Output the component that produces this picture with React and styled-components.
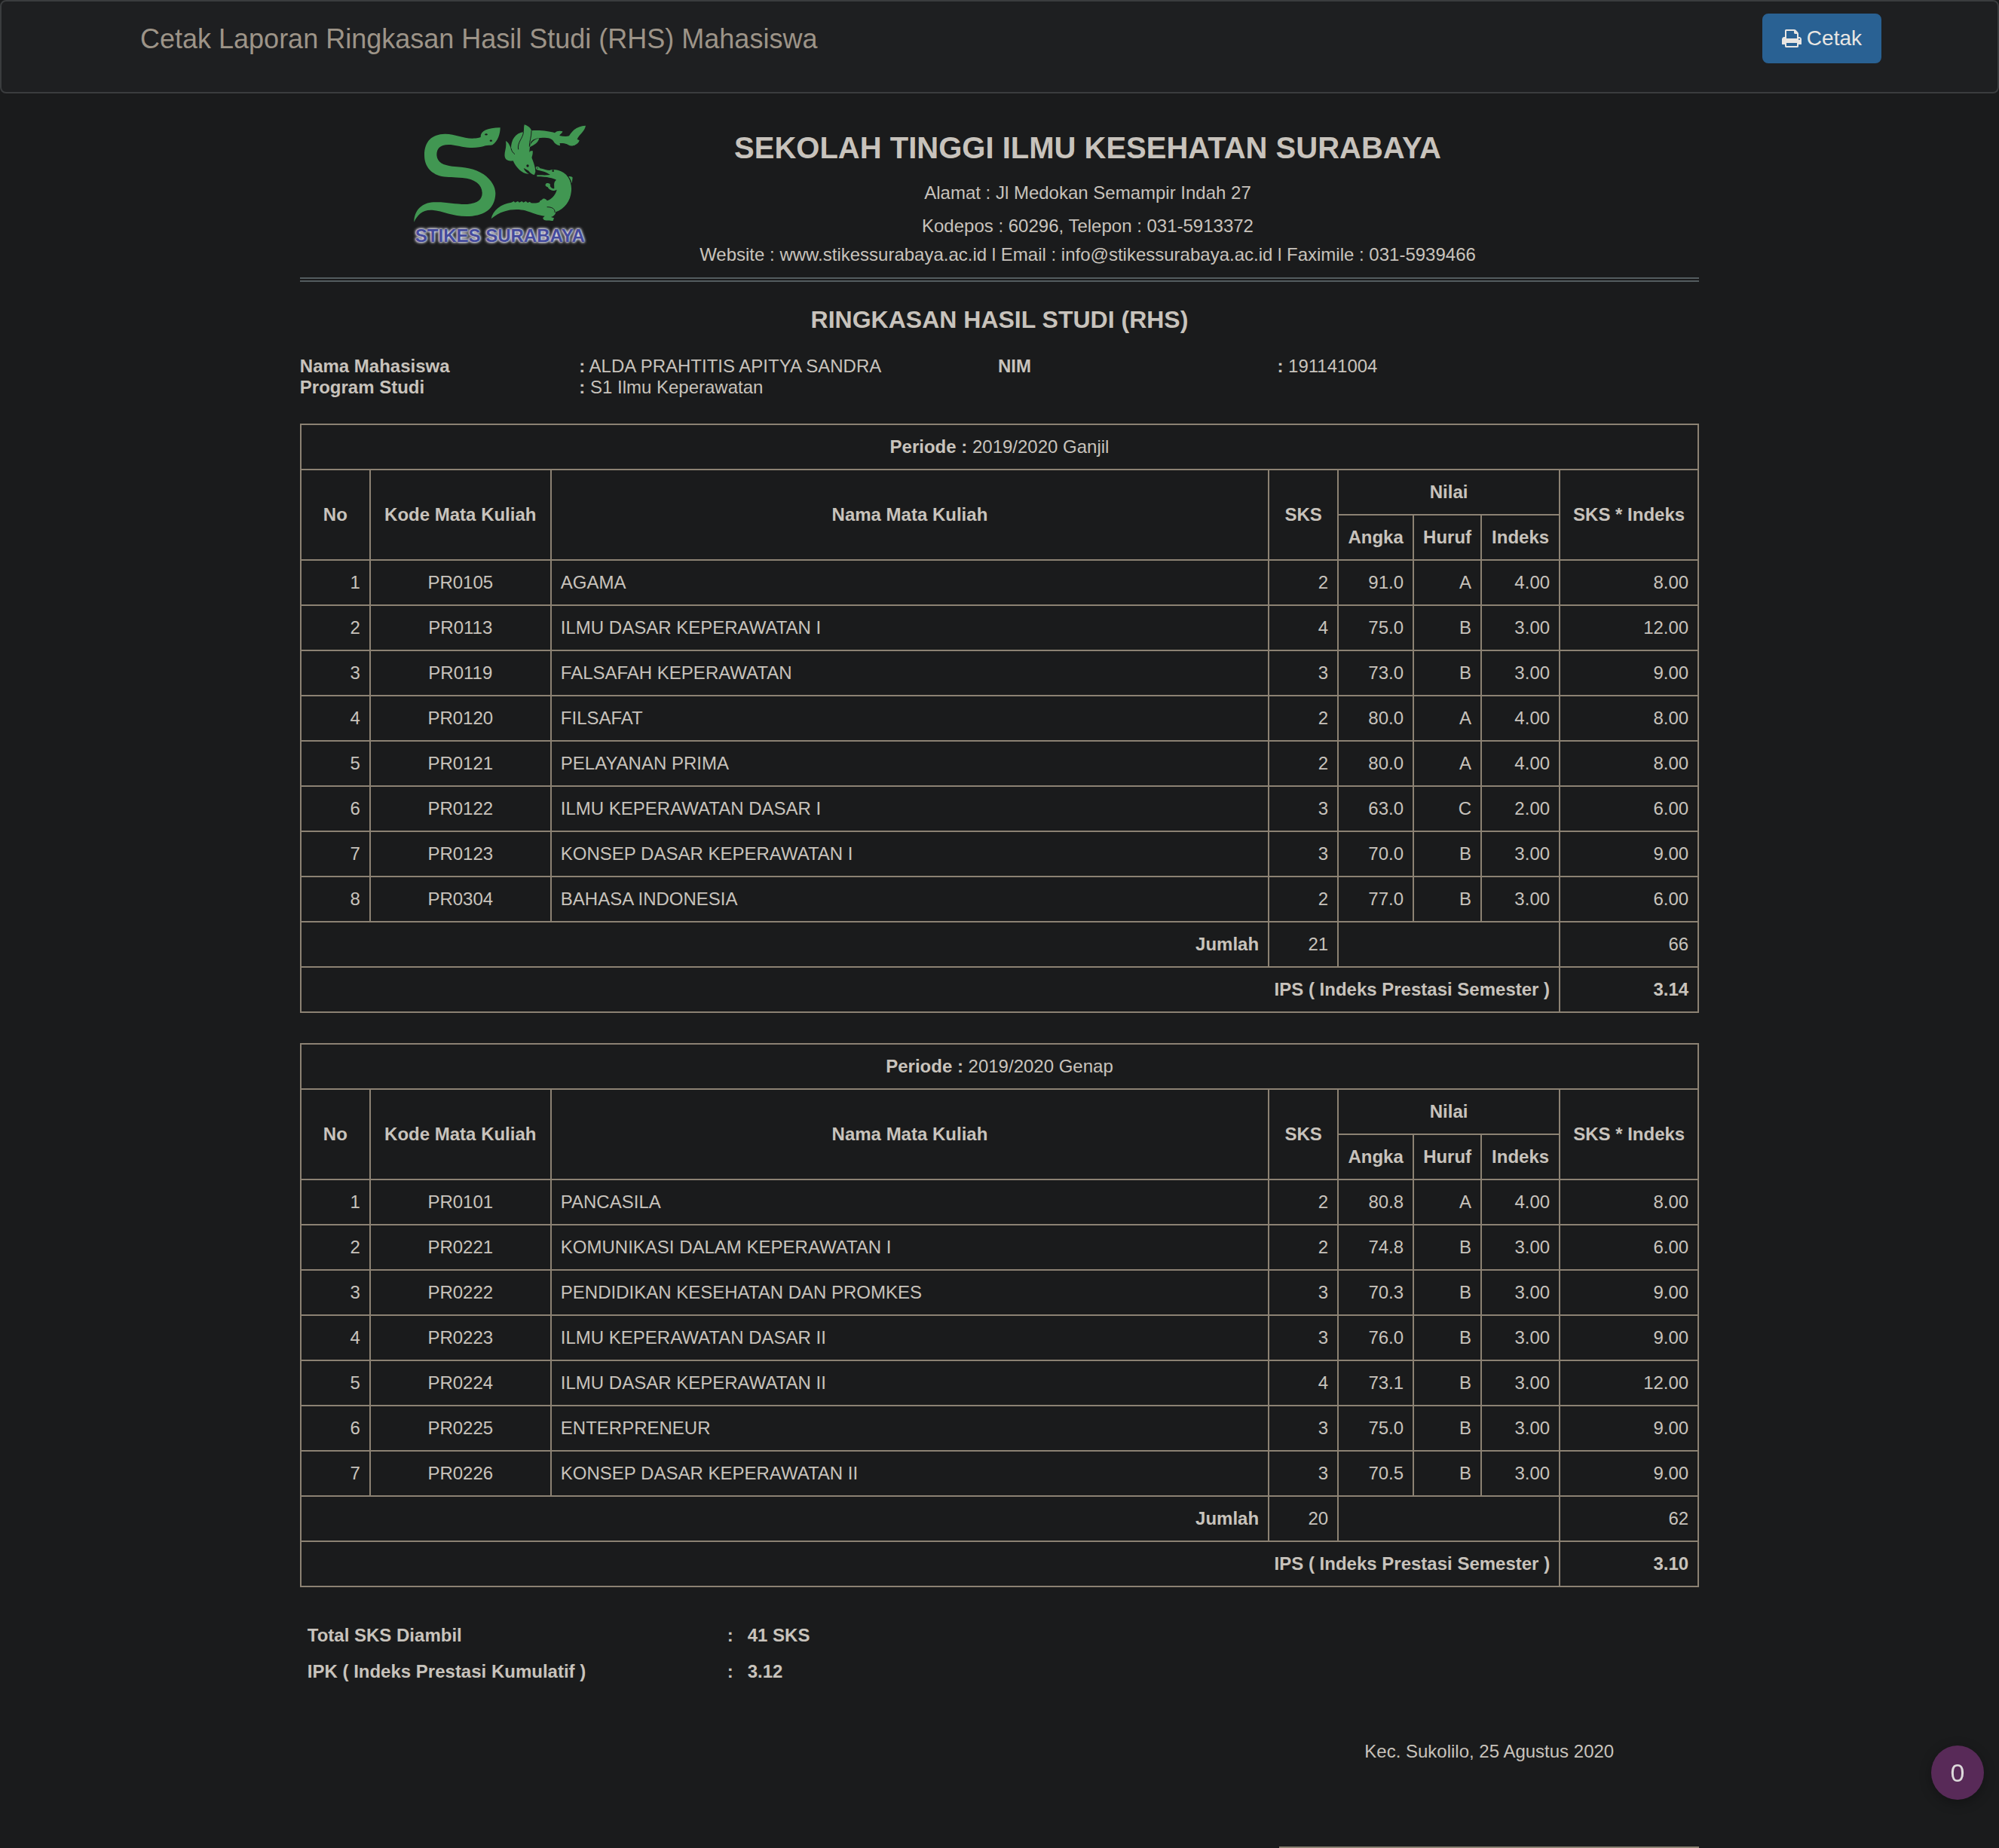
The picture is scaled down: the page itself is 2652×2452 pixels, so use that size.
import React from "react";
import styled, { createGlobalStyle } from "styled-components";

const color = {
  page: "#1a1b1c",
  bar: "#1e1f21",
  barBorder: "#3a3c3e",
  text: "#c8c3bc",
  muted: "#9d9488",
  line: "#8c8273",
  rule: "#535c5f",
  button: "#296193",
  onButton: "#e8e6e3",
  badge: "#582a58",
  logoGreen: "#419752",
  logoBlue: "#444a9c",
};

const GlobalStyle = createGlobalStyle`
  *, *::before, *::after { box-sizing: border-box; }
  body {
    margin: 0;
    background: ${color.page};
    color: ${color.text};
    font-family: "Liberation Sans", Arial, Helvetica, sans-serif;
    font-size: 24px;
    line-height: 34px;
  }
`;

const Navbar = styled.nav`
  background: ${color.bar};
  border: 2px solid ${color.barBorder};
  border-radius: 8px;
`;

const NavContainer = styled.div`
  display: flex;
  justify-content: space-between;
  align-items: flex-start;
  max-width: 2340px;
  min-height: 120px;
  margin: 0 auto;
  padding-left: 30px;
`;

const NavTitle = styled.a`
  padding-top: 30px;
  color: ${color.muted};
  font-size: 36px;
  line-height: 40px;
  text-decoration: none;
`;

const PrintButton = styled.button`
  display: flex;
  align-items: center;
  gap: 7px;
  margin-top: 16px;
  padding: 12px 24px;
  border: 2px solid ${color.button};
  border-radius: 8px;
  background: ${color.button};
  color: ${color.onButton};
  font-family: inherit;
  font-size: 28px;
  line-height: 38px;
  cursor: pointer;
`;

const Report = styled.main`
  width: 70%;
  margin: 0 auto;
`;

const Letterhead = styled.header`
  display: grid;
  grid-template-columns: 234px 1fr;
  padding: 40px 8% 14px;
  border-bottom: 6px double ${color.rule};
`;

const LogoFigure = styled.figure`
  margin: 0;
  text-align: center;
`;

const LogoDrawing = styled.svg`
  display: block;
  width: 100%;
`;

const LogoCaption = styled.figcaption`
  color: ${color.logoBlue};
  font-weight: bold;
  white-space: nowrap;
  text-shadow: 0 0 2px #d8d8e4, 0 0 3px #d8d8e4, 0 0 4px #d8d8e4, 0 0 4px #d8d8e4;
`;

const School = styled.div`
  padding-top: 10px;
  text-align: center;
`;

const SchoolName = styled.h1`
  margin: 0 0 16px;
  font-size: 40px;
  line-height: 44px;
`;

const AddressLine = styled.p`
  margin: 0;
  line-height: ${(p) => (p.$tight ? "32px" : "44px")};
`;

const ReportTitle = styled.h2`
  margin: 32px 0 30px;
  font-size: 32px;
  line-height: 36px;
  text-align: center;
`;

const Identity = styled.dl`
  display: grid;
  grid-template-columns: 20% 30% 20% 30%;
  margin: 0 0 34px;
  padding-right: 4px;
  line-height: 28px;
`;

const Term = styled.dt`
  font-weight: bold;
`;

const Detail = styled.dd`
  margin: 0;
`;

const GradeTable = styled.table`
  width: 100%;
  margin-bottom: 40px;
  border-collapse: collapse;
  table-layout: fixed;
`;

const Col = styled.col`
  width: ${(p) => p.$width};
`;

const cell = `
  height: 60px;
  padding: 10px 12px;
  border: 2px solid ${color.line};
`;

const HeadCell = styled.th`
  ${cell}
  padding: 10px 4px;
  text-align: center;
  font-weight: ${(p) => (p.$plain ? "normal" : "bold")};
`;

const Cell = styled.td`
  ${cell}
  text-align: ${(p) => p.$align || "right"};
  font-weight: ${(p) => (p.$strong ? "bold" : "normal")};
`;

const TotalLabel = styled.th`
  ${cell}
  text-align: right;
`;

const Summary = styled.table`
  width: 100%;
  border-collapse: collapse;
  font-weight: bold;
  line-height: 48px;
`;

const SummaryLabel = styled.th`
  width: 30%;
  padding: 0 10px;
  text-align: left;
`;

const SummaryColon = styled.td`
  width: 27px;
  padding: 0 9px 0 10px;
`;

const SummaryValue = styled.td`
  padding: 0 10px;
`;

const Signature = styled.section`
  width: 30%;
  margin: 65px 0 0 auto;
  padding-bottom: 109px;
  border-bottom: 2px solid ${color.line};
  text-align: center;
`;

const CounterBadge = styled.button`
  position: fixed;
  right: 20px;
  bottom: 64px;
  width: 70px;
  height: 72px;
  padding: 0;
  border: 0;
  border-radius: 50%;
  background: ${color.badge};
  box-shadow: 0 4px 16px rgba(0, 0, 0, 0.3);
  color: #dddadb;
  font-family: inherit;
  font-size: 34px;
  line-height: 70px;
`;

function PrintIcon() {
  return (
    <svg width="26" height="24" viewBox="0 128 1664 1536" fill="currentColor" aria-hidden="true">
      <path d="M384 1536h896v-256h-896v256zM384 896h896v-384h-160q-40 0-68-28t-28-68v-160h-640v640zM1536 960q0-26-19-45t-45-19-45 19-19 45 19 45 45 19 45-19 19-45zM1664 960v416q0 13-9.5 22.5t-22.5 9.5h-224v160q0 40-28 68t-68 28h-960q-40 0-68-28t-28-68v-160h-224q-13 0-22.5-9.5t-9.5-22.5v-416q0-79 56.5-135.5t135.5-56.5h64v-544q0-40 28-68t68-28h672q40 0 88 20t76 48l152 152q28 28 48 76t20 88v256h64q79 0 135.5 56.5t56.5 135.5z" />
    </svg>
  );
}

function Logo() {
  return (
    <LogoFigure>
      <LogoDrawing viewBox="78 70 702 396" fill={color.logoGreen} aria-hidden="true">
        {/* snake */}
        <path d="M88 462C88 415 120 385 165 383C220 381 250 392 300 391C343 388 360 370 359 345C358 312 330 290 280 286C245 283 225 285 198 280C150 268 129 235 129 195C129 140 160 112 210 111C250 110 280 129 320 129C340 129 348 126 353 124C352 100 378 87 431 86C431 110 422 140 400 155C390 158 380 156 372 158C350 165 330 167 300 165C270 162 250 154 225 154C190 155 178 170 178 195C180 225 205 235 240 240C290 243 330 248 365 272C400 298 412 325 412 350C410 400 380 432 320 438C250 445 210 418 160 414C120 412 100 435 88 462Z" />
        <g fill={color.page}>
          <ellipse cx="375" cy="113" rx="5" ry="3.5" />
          <ellipse cx="394" cy="138" rx="5" ry="3.5" />
        </g>
        {/* shark */}
        <path d="M555 98C590 95 625 100 648 107C655 99 668 98 679 101C679 108 670 111 667 118C680 121 695 123 705 119C718 98 735 80 771 78C768 100 745 113 737 132L746 137C743 148 730 160 708 158C695 150 688 148 668 148C667 152 670 155 669 158C655 156 647 148 642 139C637 130 625 126 600 126C575 127 558 132 552 146C549 157 549 165 547 180C550 196 571 230 571 262L567 274C558 273 550 266 544 258C538 254 530 250 524 247C528 258 535 265 545 270C520 272 495 247 482 218C470 220 455 218 450 205C444 185 458 170 453 139C465 145 470 160 474 170C474 135 490 108 524 103C526 95 524 85 527 74C545 80 553 90 555 98Z" />
        <path d="M549 164C550 148 565 132 586 128C583 146 565 155 549 164Z" />
        <path d="M546 187C548 180 552 178 560 178C562 190 557 202 554 212C551 203 548 196 546 187Z" />
        <g fill="none" stroke={color.page} strokeWidth="3">
          <path d="M523 103C524 125 497 145 503 173" />
          <path d="M555 98C556 122 546 142 547 162" />
          <path d="M474 168C476 180 482 186 489 192" />
        </g>
        <circle cx="540" cy="238" r="5" fill={color.page} />
        {/* crocodile */}
        <path d="M574 242C583 239 587 245 589 248C605 251 615 256 628 256C636 251 650 253 660 255C698 264 716 297 714 335C712 375 690 408 652 422C650 434 642 440 633 442L645 446L641 457C625 455 618 458 605 453L600 446L608 438C580 436 560 425 530 416C500 408 440 408 395 449C401 415 435 389 475 384L485 379L490 384L501 379L507 384L517 379L523 384L533 379L540 385L549 381L553 386C570 388 578 386 588 382C587 376 594 377 600 370C607 366 615 372 617 377C640 370 652 350 656 333C640 342 626 335 620 323C608 320 608 312 616 307C628 305 632 312 629 318C635 328 642 330 646 328C646 315 642 304 654 294C640 288 620 281 577 281L577 275C600 275 615 276 630 274C615 264 600 259 585 256C572 254 570 246 574 242Z" />
        <path d="M702 281C708 278 718 281 719 285L716 308L713 303C711 294 707 287 702 281Z" />
        <g fill="none" stroke={color.page} strokeWidth="3">
          <path d="M617 402C635 402 650 408 648 424" />
          <path d="M698 277C710 290 716 305 716 325" />
        </g>
        <circle cx="641" cy="258" r="4" fill={color.page} />
        <circle cx="579" cy="247" r="2.5" fill={color.page} />
      </LogoDrawing>
      <LogoCaption>STIKES SURABAYA</LogoCaption>
    </LogoFigure>
  );
}

const semesters = [
  {
    period: "2019/2020 Ganjil",
    courses: [
      ["PR0105", "AGAMA", 2, "91.0", "A", "4.00", "8.00"],
      ["PR0113", "ILMU DASAR KEPERAWATAN I", 4, "75.0", "B", "3.00", "12.00"],
      ["PR0119", "FALSAFAH KEPERAWATAN", 3, "73.0", "B", "3.00", "9.00"],
      ["PR0120", "FILSAFAT", 2, "80.0", "A", "4.00", "8.00"],
      ["PR0121", "PELAYANAN PRIMA", 2, "80.0", "A", "4.00", "8.00"],
      ["PR0122", "ILMU KEPERAWATAN DASAR I", 3, "63.0", "C", "2.00", "6.00"],
      ["PR0123", "KONSEP DASAR KEPERAWATAN I", 3, "70.0", "B", "3.00", "9.00"],
      ["PR0304", "BAHASA INDONESIA", 2, "77.0", "B", "3.00", "6.00"],
    ],
    credits: 21,
    points: 66,
    ips: "3.14",
  },
  {
    period: "2019/2020 Genap",
    courses: [
      ["PR0101", "PANCASILA", 2, "80.8", "A", "4.00", "8.00"],
      ["PR0221", "KOMUNIKASI DALAM KEPERAWATAN I", 2, "74.8", "B", "3.00", "6.00"],
      ["PR0222", "PENDIDIKAN KESEHATAN DAN PROMKES", 3, "70.3", "B", "3.00", "9.00"],
      ["PR0223", "ILMU KEPERAWATAN DASAR II", 3, "76.0", "B", "3.00", "9.00"],
      ["PR0224", "ILMU DASAR KEPERAWATAN II", 4, "73.1", "B", "3.00", "12.00"],
      ["PR0225", "ENTERPRENEUR", 3, "75.0", "B", "3.00", "9.00"],
      ["PR0226", "KONSEP DASAR KEPERAWATAN II", 3, "70.5", "B", "3.00", "9.00"],
    ],
    credits: 20,
    points: 62,
    ips: "3.10",
  },
];

const columnWidths = ["92px", "240px", "auto", "92px", "100px", "90px", "104px", "184px"];

function SemesterTable({ semester }) {
  return (
    <GradeTable>
      <colgroup>
        {columnWidths.map((width, i) => (
          <Col key={i} $width={width} />
        ))}
      </colgroup>
      <thead>
        <tr>
          <HeadCell colSpan={8} $plain>
            <b>Periode :</b> {semester.period}
          </HeadCell>
        </tr>
        <tr>
          <HeadCell rowSpan={2}>No</HeadCell>
          <HeadCell rowSpan={2}>Kode Mata Kuliah</HeadCell>
          <HeadCell rowSpan={2}>Nama Mata Kuliah</HeadCell>
          <HeadCell rowSpan={2}>SKS</HeadCell>
          <HeadCell colSpan={3}>Nilai</HeadCell>
          <HeadCell rowSpan={2}>SKS * Indeks</HeadCell>
        </tr>
        <tr>
          <HeadCell>Angka</HeadCell>
          <HeadCell>Huruf</HeadCell>
          <HeadCell>Indeks</HeadCell>
        </tr>
      </thead>
      <tbody>
        {semester.courses.map(([code, name, credits, score, letter, index, points], i) => (
          <tr key={code}>
            <Cell>{i + 1}</Cell>
            <Cell $align="center">{code}</Cell>
            <Cell $align="left">{name}</Cell>
            <Cell>{credits}</Cell>
            <Cell>{score}</Cell>
            <Cell>{letter}</Cell>
            <Cell>{index}</Cell>
            <Cell>{points}</Cell>
          </tr>
        ))}
      </tbody>
      <tfoot>
        <tr>
          <TotalLabel colSpan={3} scope="row">Jumlah</TotalLabel>
          <Cell>{semester.credits}</Cell>
          <Cell colSpan={3} />
          <Cell>{semester.points}</Cell>
        </tr>
        <tr>
          <TotalLabel colSpan={7} scope="row">IPS ( Indeks Prestasi Semester )</TotalLabel>
          <Cell $strong>{semester.ips}</Cell>
        </tr>
      </tfoot>
    </GradeTable>
  );
}

export default function App() {
  return (
    <>
      <GlobalStyle />
      <Navbar>
        <NavContainer>
          <NavTitle href="#">Cetak Laporan Ringkasan Hasil Studi (RHS) Mahasiswa</NavTitle>
          <PrintButton type="button" onClick={() => window.print()}>
            <PrintIcon />
            Cetak
          </PrintButton>
        </NavContainer>
      </Navbar>

      <Report>
        <Letterhead>
          <Logo />
          <School>
            <SchoolName>SEKOLAH TINGGI ILMU KESEHATAN SURABAYA</SchoolName>
            <AddressLine>Alamat : Jl Medokan Semampir Indah 27</AddressLine>
            <AddressLine>Kodepos : 60296, Telepon : 031-5913372</AddressLine>
            <AddressLine $tight>
              Website : www.stikessurabaya.ac.id l Email : info@stikessurabaya.ac.id l Faximile : 031-5939466
            </AddressLine>
          </School>
        </Letterhead>

        <ReportTitle>RINGKASAN HASIL STUDI (RHS)</ReportTitle>

        <Identity>
          <Term>Nama Mahasiswa</Term>
          <Detail><b>:</b> ALDA PRAHTITIS APITYA SANDRA</Detail>
          <Term>NIM</Term>
          <Detail><b>:</b> 191141004</Detail>
          <Term>Program Studi</Term>
          <Detail><b>:</b> S1 Ilmu Keperawatan</Detail>
        </Identity>

        {semesters.map((semester) => (
          <SemesterTable key={semester.period} semester={semester} />
        ))}

        <Summary>
          <tbody>
            <tr>
              <SummaryLabel scope="row">Total SKS Diambil</SummaryLabel>
              <SummaryColon>:</SummaryColon>
              <SummaryValue>41 SKS</SummaryValue>
            </tr>
            <tr>
              <SummaryLabel scope="row">IPK ( Indeks Prestasi Kumulatif )</SummaryLabel>
              <SummaryColon>:</SummaryColon>
              <SummaryValue>3.12</SummaryValue>
            </tr>
          </tbody>
        </Summary>

        <Signature>Kec. Sukolilo, 25 Agustus 2020</Signature>
      </Report>

      <CounterBadge type="button">0</CounterBadge>
    </>
  );
}
